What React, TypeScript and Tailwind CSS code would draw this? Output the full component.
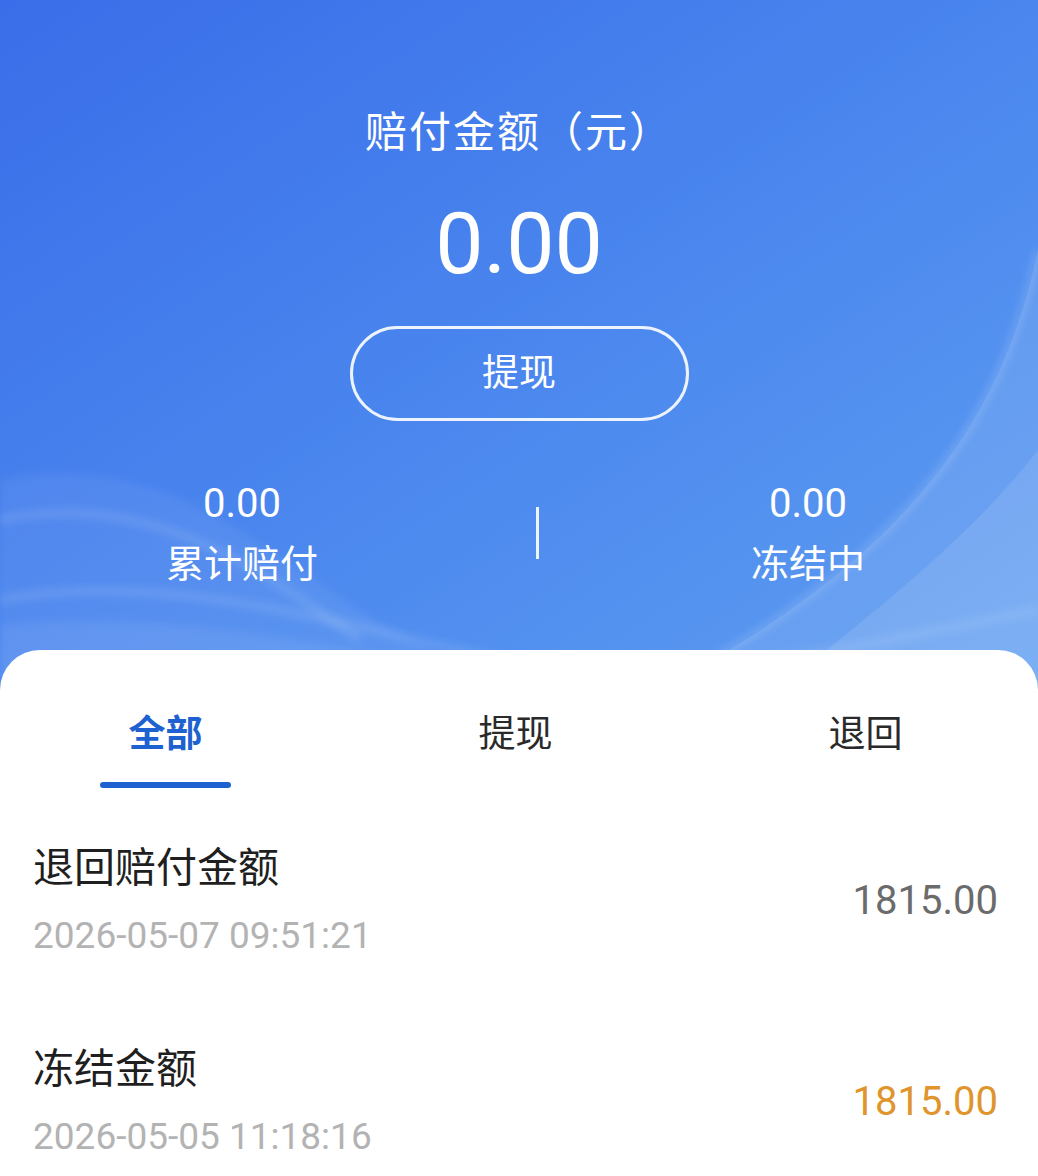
const font = { fontFamily: "Roboto, 'Noto Sans CJK SC', sans-serif" };

function Waves() {
  return (
    <svg
      className="pointer-events-none absolute inset-0 h-full w-full"
      viewBox="0 0 1038 690"
      preserveAspectRatio="none"
    >
      <defs>
        <filter id="soft" x="-10%" y="-10%" width="120%" height="120%">
          <feGaussianBlur stdDeviation="4" />
        </filter>
      </defs>
      <path
        d="M1038 250 C 1000 430, 900 560, 660 690 L 1038 690 Z"
        fill="#ffffff"
        fillOpacity="0.1"
      />
      <path
        d="M1038 250 C 1000 430, 900 560, 660 690"
        fill="none"
        stroke="#ffffff"
        strokeOpacity="0.22"
        strokeWidth="5"
        filter="url(#soft)"
      />
      <path
        d="M1038 450 C 960 550, 860 620, 780 690 L 1038 690 Z"
        fill="#ffffff"
        fillOpacity="0.1"
      />
      <path
        d="M0 480 C 130 450, 230 520, 330 590 C 400 640, 470 670, 540 690 L 0 690 Z"
        fill="#ffffff"
        fillOpacity="0.06"
        filter="url(#soft)"
      />
      <path
        d="M0 520 C 140 490, 250 560, 360 640"
        fill="none"
        stroke="#ffffff"
        strokeOpacity="0.12"
        strokeWidth="8"
        filter="url(#soft)"
      />
      <path
        d="M0 600 C 160 570, 330 620, 520 665 C 650 690, 820 655, 1038 610"
        fill="none"
        stroke="#ffffff"
        strokeOpacity="0.12"
        strokeWidth="8"
        filter="url(#soft)"
      />
      <path
        d="M0 625 C 200 605, 380 660, 560 690 L 0 690 Z"
        fill="#ffffff"
        fillOpacity="0.07"
        filter="url(#soft)"
      />
    </svg>
  );
}

const records = [
  {
    title: "退回赔付金额",
    time: "2026-05-07 09:51:21",
    amount: "1815.00",
    color: "text-[#6b6b6b]",
  },
  {
    title: "冻结金额",
    time: "2026-05-05 11:18:16",
    amount: "1815.00",
    color: "text-[#e0952c]",
  },
];

export default function App() {
  return (
    <div className="h-[1176px] w-[1038px] overflow-hidden bg-white" style={font}>
      <div className="relative h-[690px] bg-gradient-to-br from-[#3a6de9] via-[#4a86ee] to-[#5e9df1] text-white">
        <Waves />
        <div className="relative flex flex-col items-center pt-[112px]">
          <div className="text-[42px] leading-[42px] tracking-[2px]">赔付金额（元）</div>
          <div className="mt-[47px] text-[86px] leading-[86px]">0.00</div>
          <button className="mt-[39px] flex h-[95px] w-[339px] items-center justify-center rounded-full border-[3px] border-white/90 text-[37px] leading-none">
            提现
          </button>
        </div>
        <div className="relative mt-[63px] flex items-start">
          <div className="flex w-[484px] flex-col items-center">
            <div className="text-[40px] leading-[40px]">0.00</div>
            <div className="mt-[21px] text-[38px] leading-[38px]">累计赔付</div>
          </div>
          <div className="flex w-[106px] justify-center pt-[23px]">
            <div className="h-[52px] w-[3px] bg-white/90" />
          </div>
          <div className="flex flex-1 flex-col items-center pr-[12px]">
            <div className="text-[40px] leading-[40px]">0.00</div>
            <div className="mt-[21px] text-[38px] leading-[38px]">冻结中</div>
          </div>
        </div>
      </div>

      <div className="relative -mt-[40px] rounded-t-[40px] bg-white">
        <div className="flex justify-between pl-[100px] pr-[107px] pt-[66px]">
          <div className="flex w-[131px] flex-col items-center">
            <div className="text-[37px] font-bold leading-[37px] text-[#1d62d0]">全部</div>
            <div className="mt-[29px] h-[6px] w-full rounded-full bg-[#1d62d0]" />
          </div>
          <div className="flex w-[131px] flex-col items-center">
            <div className="text-[37px] leading-[37px] text-[#2a2a2a]">提现</div>
          </div>
          <div className="flex w-[131px] flex-col items-center">
            <div className="text-[37px] leading-[37px] text-[#2a2a2a]">退回</div>
          </div>
        </div>

        <ul className="mt-[60px] flex flex-col gap-[95px] pl-[33px] pr-[40px]">
          {records.map((r) => (
            <li key={r.time} className="flex items-center justify-between">
              <div>
                <div className="text-[41px] leading-[41px] text-[#1f1f1f]">{r.title}</div>
                <div className="mt-[28px] text-[37px] leading-[37px] text-[#b3b3b3]">{r.time}</div>
              </div>
              <div className={`text-[40px] leading-[40px] ${r.color}`}>{r.amount}</div>
            </li>
          ))}
        </ul>
      </div>
    </div>
  );
}
